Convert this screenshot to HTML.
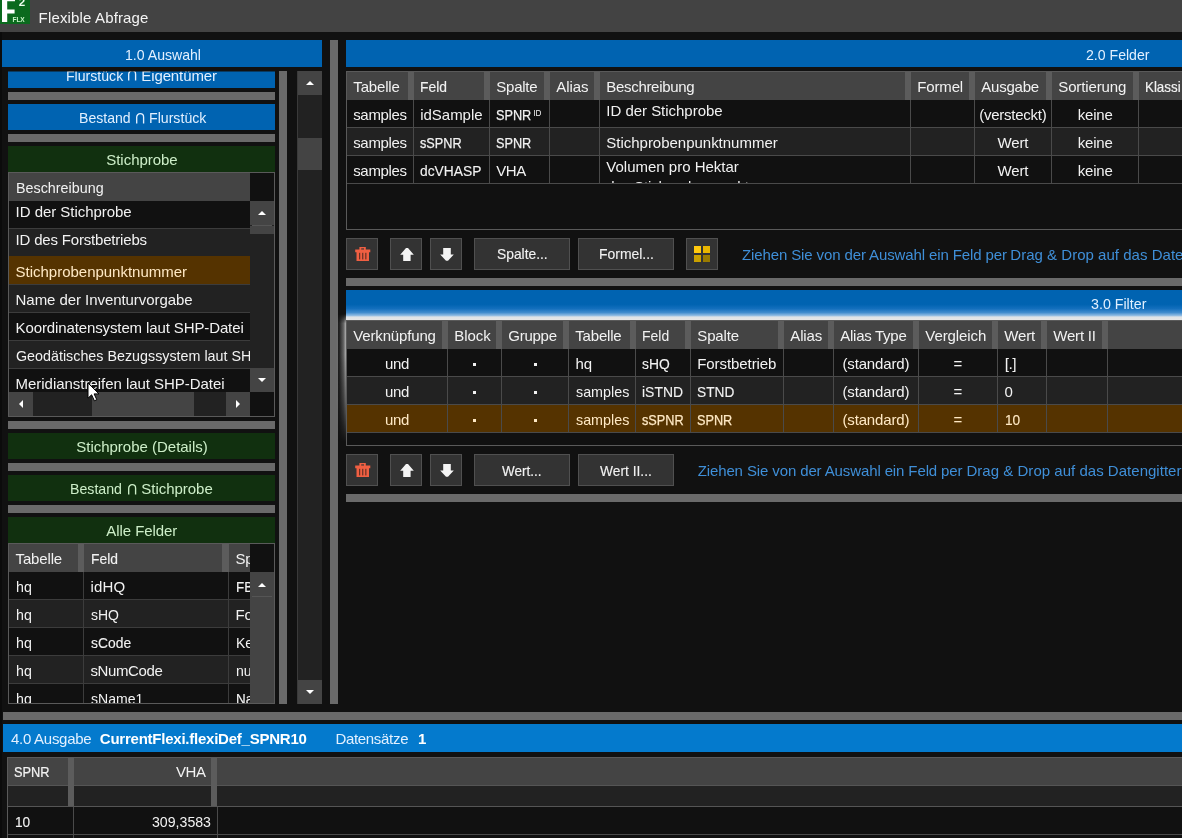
<!DOCTYPE html>
<html><head><meta charset="utf-8"><title>Flexible Abfrage</title>
<style>
html,body{margin:0;padding:0;background:#111111;}
body{width:1182px;height:838px;overflow:hidden;position:relative;font-family:"Liberation Sans", sans-serif;font-size:15px;color:#f0f0f0;}
div{position:absolute;box-sizing:border-box;}
svg{position:absolute;overflow:visible;}
</style></head><body><div id="root" style="left:0;top:0;width:1182px;height:838px;will-change:transform">
<div style="left:0px;top:0px;width:1182px;height:32px;background:#434343;"></div>
<div style="left:0px;top:0px;width:30px;height:24px;background:#0b6a1e;"></div>
<svg style="left:0;top:0" width="30" height="24"><path d="M2 -3 H15 V1.2 H7.2 V9.6 H14.6 V13.4 H7.2 V22 H2 Z" fill="#fff"/></svg>
<div style="left:18.80px;top:-7.83px;line-height:20px;height:20px;white-space:pre;color:#f0fff0;font-size:11.5px;font-weight:700;">2</div>
<div style="left:12.60px;top:9.86px;line-height:20px;height:20px;white-space:pre;color:#c8f5c8;font-size:6.6px;font-weight:700;letter-spacing:-0.156px;">FLX</div>
<div style="left:38.60px;top:7.95px;line-height:20px;height:20px;white-space:pre;color:#f4f4f4;font-size:15px;font-weight:400;letter-spacing:0.151px;">Flexible Abfrage</div>
<div style="left:0px;top:32px;width:2px;height:806px;background:#0b0b0b;"></div>
<div style="left:2px;top:40px;width:320px;height:27px;background:#0063b1;"></div>
<div style="left:125.00px;top:44.65px;line-height:20px;height:20px;white-space:pre;color:#e2f0ff;font-size:15px;font-weight:400;width:80.89px;transform:scaleX(0.9395);transform-origin:0 0;">1.0 Auswahl</div>
<div style="left:279px;top:71px;width:8px;height:633px;background:#6a6a6a;"></div>
<div style="left:330px;top:40px;width:8px;height:664px;background:#6a6a6a;"></div>
<div style="left:8px;top:71px;width:267px;height:633px;overflow:hidden;"><div style="left:-8px;top:-71px;width:1182px;height:838px">
<div style="left:8px;top:71px;width:267px;height:1px;background:rgba(17,17,17,0.5);z-index:5;"></div>
<div style="left:8px;top:62px;width:267px;height:26px;background:#0063b1;"></div>
<div style="left:66.00px;top:65.55px;line-height:20px;height:20px;white-space:pre;color:#e2f0ff;font-size:15px;font-weight:400;width:60.84px;transform:scaleX(0.9401);transform-origin:0 0;">Flurstück</div>
<svg style="left:128px;top:70.19999999999999px" width="8.3" height="10.4" viewBox="0 0 8.3 10.4"><path d="M0.7 10.4 V4.15 A3.45 3.45 0 0 1 7.6000000000000005 4.15 V10.4" fill="none" stroke="#e2f0ff" stroke-width="1.35"/></svg>
<div style="left:141.30px;top:65.55px;line-height:20px;height:20px;white-space:pre;color:#e2f0ff;font-size:15px;font-weight:400;letter-spacing:-0.112px;">Eigentümer</div>
<div style="left:8px;top:92px;width:267px;height:8px;background:#6a6a6a;"></div>
<div style="left:8px;top:104px;width:267px;height:26px;background:#0063b1;"></div>
<div style="left:78.50px;top:107.95px;line-height:20px;height:20px;white-space:pre;color:#e2f0ff;font-size:15px;font-weight:400;width:55.05px;transform:scaleX(0.9374);transform-origin:0 0;">Bestand</div>
<svg style="left:135.8px;top:112.6px" width="8.3" height="10.4" viewBox="0 0 8.3 10.4"><path d="M0.7 10.4 V4.15 A3.45 3.45 0 0 1 7.6000000000000005 4.15 V10.4" fill="none" stroke="#e2f0ff" stroke-width="1.35"/></svg>
<div style="left:149.20px;top:107.95px;line-height:20px;height:20px;white-space:pre;color:#e2f0ff;font-size:15px;font-weight:400;width:60.84px;transform:scaleX(0.9434);transform-origin:0 0;">Flurstück</div>
<div style="left:8px;top:134px;width:267px;height:8px;background:#6a6a6a;"></div>
<div style="left:8px;top:146px;width:267px;height:26px;background:#11300f;"></div>
<div style="left:106.28px;top:150.15px;line-height:20px;height:20px;white-space:pre;color:#cdeec8;font-size:15px;font-weight:400;letter-spacing:-0.032px;">Stichprobe</div>
<div style="left:8px;top:172px;width:267px;height:245px;background:#5a5a5a;"></div>
<div style="left:9px;top:173px;width:265px;height:243px;background:#222222;"></div>
<div style="left:9px;top:173px;width:241px;height:28px;background:#444444;"></div>
<div style="left:250px;top:173px;width:24px;height:28px;background:#111111;"></div>
<div style="left:15.60px;top:177.95px;line-height:20px;height:20px;white-space:pre;color:#f2f2f2;font-size:15px;font-weight:400;width:91.73px;transform:scaleX(0.9549);transform-origin:0 0;">Beschreibung</div>
<div style="left:9px;top:201px;width:241px;height:27px;background:#111111;"></div>
<div style="left:9px;top:229px;width:241px;height:27px;background:#222222;"></div>
<div style="left:9px;top:256px;width:241px;height:28px;background:#553300;"></div>
<div style="left:9px;top:285px;width:241px;height:27px;background:#222222;"></div>
<div style="left:9px;top:313px;width:241px;height:27px;background:#111111;"></div>
<div style="left:9px;top:341px;width:241px;height:27px;background:#222222;"></div>
<div style="left:9px;top:369px;width:241px;height:23px;background:#111111;"></div>
<div style="left:9px;top:228px;width:241px;height:1px;background:#3c3c3c;"></div>
<div style="left:9px;top:284px;width:241px;height:1px;background:#3c3c3c;"></div>
<div style="left:9px;top:312px;width:241px;height:1px;background:#3c3c3c;"></div>
<div style="left:9px;top:340px;width:241px;height:1px;background:#3c3c3c;"></div>
<div style="left:9px;top:368px;width:241px;height:1px;background:#3c3c3c;"></div>
<div style="left:9px;top:201px;width:241px;height:191px;overflow:hidden;"><div style="left:-9px;top:-201px;width:1182px;height:838px">
<div style="left:15.60px;top:202.15px;line-height:20px;height:20px;white-space:pre;color:#f2f2f2;font-size:15px;font-weight:400;letter-spacing:-0.043px;">ID der Stichprobe</div>
<div style="left:15.60px;top:229.75px;line-height:20px;height:20px;white-space:pre;color:#f2f2f2;font-size:15px;font-weight:400;letter-spacing:-0.188px;">ID des Forstbetriebs</div>
<div style="left:15.60px;top:261.85px;line-height:20px;height:20px;white-space:pre;color:#ffe9c4;font-size:15px;font-weight:400;letter-spacing:-0.017px;">Stichprobenpunktnummer</div>
<div style="left:15.60px;top:290.25px;line-height:20px;height:20px;white-space:pre;color:#f2f2f2;font-size:15px;font-weight:400;letter-spacing:-0.060px;">Name der Inventurvorgabe</div>
<div style="left:15.60px;top:317.85px;line-height:20px;height:20px;white-space:pre;color:#f2f2f2;font-size:15px;font-weight:400;letter-spacing:-0.118px;">Koordinatensystem laut SHP-Datei</div>
<div style="left:15.60px;top:345.75px;line-height:20px;height:20px;white-space:pre;color:#f2f2f2;font-size:15px;font-weight:400;width:296.81px;transform:scaleX(0.9535);transform-origin:0 0;">Geodätisches Bezugssystem laut SHP-Datei</div>
<div style="left:15.60px;top:373.95px;line-height:20px;height:20px;white-space:pre;color:#f2f2f2;font-size:15px;font-weight:400;letter-spacing:-0.035px;">Meridianstreifen laut SHP-Datei</div>
</div></div>
<div style="left:250px;top:201px;width:24px;height:191px;background:#222222;"></div>
<div style="left:250px;top:201px;width:24px;height:24px;background:#444444;"></div>
<div style="left:252px;top:225px;width:20px;height:1px;background:#555555;"></div>
<div style="left:250px;top:226px;width:24px;height:8px;background:#444444;"></div>
<svg style="left:258px;top:211px" width="8" height="4"><path d="M0 4 L4 0 L8 4 Z" fill="#ffffff"/></svg>
<div style="left:250px;top:368px;width:24px;height:24px;background:#444444;"></div>
<svg style="left:258px;top:378px" width="8" height="4"><path d="M0 0 L8 0 L4 4 Z" fill="#ffffff"/></svg>
<div style="left:9px;top:392px;width:241px;height:24px;background:#222222;"></div>
<div style="left:9px;top:392px;width:24px;height:24px;background:#444444;"></div>
<svg style="left:19px;top:400px" width="4" height="8"><path d="M4 0 L4 8 L0 4 Z" fill="#ffffff"/></svg>
<div style="left:92px;top:392px;width:102px;height:24px;background:#444444;"></div>
<div style="left:226px;top:392px;width:24px;height:24px;background:#444444;"></div>
<svg style="left:236px;top:400px" width="4" height="8"><path d="M0 0 L0 8 L4 4 Z" fill="#ffffff"/></svg>
<div style="left:250px;top:392px;width:24px;height:24px;background:#111111;"></div>
<div style="left:8px;top:421px;width:267px;height:8px;background:#6a6a6a;"></div>
<div style="left:8px;top:433px;width:267px;height:26px;background:#11300f;"></div>
<div style="left:76.24px;top:436.75px;line-height:20px;height:20px;white-space:pre;color:#cdeec8;font-size:15px;font-weight:400;letter-spacing:-0.011px;">Stichprobe (Details)</div>
<div style="left:8px;top:463px;width:267px;height:8px;background:#6a6a6a;"></div>
<div style="left:8px;top:475px;width:267px;height:26px;background:#11300f;"></div>
<div style="left:70.20px;top:479.05px;line-height:20px;height:20px;white-space:pre;color:#cdeec8;font-size:15px;font-weight:400;width:55.05px;transform:scaleX(0.9446);transform-origin:0 0;">Bestand</div>
<svg style="left:127.7px;top:483.70000000000005px" width="8.3" height="10.4" viewBox="0 0 8.3 10.4"><path d="M0.7 10.4 V4.15 A3.45 3.45 0 0 1 7.6000000000000005 4.15 V10.4" fill="none" stroke="#cdeec8" stroke-width="1.35"/></svg>
<div style="left:141.30px;top:479.05px;line-height:20px;height:20px;white-space:pre;color:#cdeec8;font-size:15px;font-weight:400;letter-spacing:-0.032px;">Stichprobe</div>
<div style="left:8px;top:505px;width:267px;height:8px;background:#6a6a6a;"></div>
<div style="left:8px;top:517px;width:267px;height:26px;background:#11300f;"></div>
<div style="left:106.27px;top:521.05px;line-height:20px;height:20px;white-space:pre;color:#cdeec8;font-size:15px;font-weight:400;letter-spacing:-0.064px;">Alle Felder</div>
<div style="left:8px;top:543px;width:267px;height:161px;background:#5a5a5a;"></div>
<div style="left:9px;top:544px;width:265px;height:159px;background:#111111;"></div>
<div style="left:9px;top:544px;width:241px;height:28px;background:#444444;"></div>
<div style="left:78px;top:544px;width:6px;height:28px;background:#5c5c5c;"></div>
<div style="left:222px;top:544px;width:7px;height:28px;background:#5c5c5c;"></div>
<div style="left:250px;top:544px;width:24px;height:28px;background:#111111;"></div>
<div style="left:15.60px;top:548.65px;line-height:20px;height:20px;white-space:pre;color:#f2f2f2;font-size:15px;font-weight:400;letter-spacing:-0.164px;">Tabelle</div>
<div style="left:90.50px;top:548.65px;line-height:20px;height:20px;white-space:pre;color:#f2f2f2;font-size:15px;font-weight:400;width:29.19px;transform:scaleX(0.9251);transform-origin:0 0;-webkit-text-stroke:0.12px #f2f2f2;">Feld</div>
<div style="left:229px;top:544px;width:21px;height:159px;overflow:hidden;"><div style="left:-229px;top:-544px;width:1182px;height:838px">
<div style="left:235.50px;top:548.65px;line-height:20px;height:20px;white-space:pre;color:#f2f2f2;font-size:15px;font-weight:400;letter-spacing:-0.258px;">Spalte</div>
</div></div>
<div style="left:9px;top:572px;width:241px;height:27px;background:#111111;"></div>
<div style="left:9px;top:600px;width:241px;height:27px;background:#222222;"></div>
<div style="left:9px;top:628px;width:241px;height:27px;background:#111111;"></div>
<div style="left:9px;top:656px;width:241px;height:27px;background:#222222;"></div>
<div style="left:9px;top:684px;width:241px;height:19px;background:#111111;"></div>
<div style="left:9px;top:599px;width:241px;height:1px;background:#3c3c3c;"></div>
<div style="left:9px;top:627px;width:241px;height:1px;background:#3c3c3c;"></div>
<div style="left:9px;top:655px;width:241px;height:1px;background:#3c3c3c;"></div>
<div style="left:9px;top:683px;width:241px;height:1px;background:#3c3c3c;"></div>
<div style="left:83px;top:572px;width:1px;height:131px;background:#3c3c3c;"></div>
<div style="left:228px;top:572px;width:1px;height:131px;background:#3c3c3c;"></div>
<div style="left:9px;top:572px;width:241px;height:131px;overflow:hidden;"><div style="left:-9px;top:-572px;width:1182px;height:838px">
<div style="left:15.60px;top:576.55px;line-height:20px;height:20px;white-space:pre;color:#f2f2f2;font-size:15px;font-weight:400;width:16.69px;transform:scaleX(0.9468);transform-origin:0 0;">hq</div>
<div style="left:90.50px;top:576.55px;line-height:20px;height:20px;white-space:pre;color:#f2f2f2;font-size:15px;font-weight:400;letter-spacing:0.153px;">idHQ</div>
<div style="left:235.50px;top:576.55px;line-height:20px;height:20px;white-space:pre;color:#f2f2f2;font-size:15px;font-weight:400;width:40.84px;transform:scaleX(0.8936);transform-origin:0 0;-webkit-text-stroke:0.17px #f2f2f2;">FBNR</div>
<div style="left:15.60px;top:604.95px;line-height:20px;height:20px;white-space:pre;color:#f2f2f2;font-size:15px;font-weight:400;width:16.69px;transform:scaleX(0.9468);transform-origin:0 0;">hq</div>
<div style="left:90.50px;top:604.95px;line-height:20px;height:20px;white-space:pre;color:#f2f2f2;font-size:15px;font-weight:400;width:30.00px;transform:scaleX(0.9333);transform-origin:0 0;">sHQ</div>
<div style="left:235.50px;top:604.95px;line-height:20px;height:20px;white-space:pre;color:#f2f2f2;font-size:15px;font-weight:400;letter-spacing:-0.071px;">Forstbetrieb</div>
<div style="left:15.60px;top:632.95px;line-height:20px;height:20px;white-space:pre;color:#f2f2f2;font-size:15px;font-weight:400;width:16.69px;transform:scaleX(0.9468);transform-origin:0 0;">hq</div>
<div style="left:90.50px;top:632.95px;line-height:20px;height:20px;white-space:pre;color:#f2f2f2;font-size:15px;font-weight:400;width:43.36px;transform:scaleX(0.9248);transform-origin:0 0;-webkit-text-stroke:0.12px #f2f2f2;">sCode</div>
<div style="left:235.50px;top:632.95px;line-height:20px;height:20px;white-space:pre;color:#f2f2f2;font-size:15px;font-weight:400;width:60.06px;transform:scaleX(0.9324);transform-origin:0 0;">Kennung</div>
<div style="left:15.60px;top:660.85px;line-height:20px;height:20px;white-space:pre;color:#f2f2f2;font-size:15px;font-weight:400;width:16.69px;transform:scaleX(0.9468);transform-origin:0 0;">hq</div>
<div style="left:90.50px;top:660.85px;line-height:20px;height:20px;white-space:pre;color:#f2f2f2;font-size:15px;font-weight:400;letter-spacing:-0.391px;">sNumCode</div>
<div style="left:235.50px;top:660.85px;line-height:20px;height:20px;white-space:pre;color:#f2f2f2;font-size:15px;font-weight:400;width:73.38px;transform:scaleX(0.9404);transform-origin:0 0;">num. Code</div>
<div style="left:15.60px;top:688.85px;line-height:20px;height:20px;white-space:pre;color:#f2f2f2;font-size:15px;font-weight:400;width:16.69px;transform:scaleX(0.9468);transform-origin:0 0;">hq</div>
<div style="left:90.50px;top:688.85px;line-height:20px;height:20px;white-space:pre;color:#f2f2f2;font-size:15px;font-weight:400;width:55.86px;transform:scaleX(0.9381);transform-origin:0 0;">sName1</div>
<div style="left:235.50px;top:688.85px;line-height:20px;height:20px;white-space:pre;color:#f2f2f2;font-size:15px;font-weight:400;width:52.53px;transform:scaleX(0.8947);transform-origin:0 0;-webkit-text-stroke:0.17px #f2f2f2;">Name 1</div>
</div></div>
<div style="left:250px;top:572px;width:24px;height:131px;background:#444444;"></div>
<div style="left:252px;top:596px;width:20px;height:1px;background:#555555;"></div>
<svg style="left:258px;top:583px" width="8" height="4"><path d="M0 4 L4 0 L8 4 Z" fill="#ffffff"/></svg>
<div style="left:8px;top:703px;width:267px;height:1px;background:#5a5a5a;"></div>
</div></div>
<div style="left:297px;top:71px;width:25px;height:633px;background:#222222;"></div>
<div style="left:297px;top:71px;width:25px;height:24px;background:#444444;"></div>
<svg style="left:305.8px;top:81px" width="8" height="4"><path d="M0 4 L4 0 L8 4 Z" fill="#ffffff"/></svg>
<div style="left:297px;top:138px;width:25px;height:32px;background:#444444;"></div>
<div style="left:297px;top:680px;width:25px;height:24px;background:#444444;"></div>
<svg style="left:305.8px;top:690px" width="8" height="4"><path d="M0 0 L8 0 L4 4 Z" fill="#ffffff"/></svg>
<div style="left:297px;top:71px;width:1px;height:633px;background:#3a3a3a;"></div>
<div style="left:346px;top:40px;width:836px;height:27px;background:#0063b1;"></div>
<div style="left:1086.25px;top:44.65px;line-height:20px;height:20px;white-space:pre;color:#e2f0ff;font-size:15px;font-weight:400;width:67.55px;transform:scaleX(0.9401);transform-origin:0 0;">2.0 Felder</div>
<div style="left:346px;top:71px;width:836px;height:159px;background:#5a5a5a;"></div>
<div style="left:347px;top:72px;width:835px;height:157px;background:#111111;"></div>
<div style="left:347px;top:72px;width:835px;height:28px;background:#444444;"></div>
<div style="left:408px;top:72px;width:6px;height:28px;background:#5c5c5c;"></div>
<div style="left:353.30px;top:77.35px;line-height:20px;height:20px;white-space:pre;color:#f2f2f2;font-size:15px;font-weight:400;letter-spacing:-0.164px;">Tabelle</div>
<div style="left:484px;top:72px;width:6px;height:28px;background:#5c5c5c;"></div>
<div style="left:420.30px;top:77.35px;line-height:20px;height:20px;white-space:pre;color:#f2f2f2;font-size:15px;font-weight:400;width:29.19px;transform:scaleX(0.9251);transform-origin:0 0;-webkit-text-stroke:0.12px #f2f2f2;">Feld</div>
<div style="left:544px;top:72px;width:6px;height:28px;background:#5c5c5c;"></div>
<div style="left:496.30px;top:77.35px;line-height:20px;height:20px;white-space:pre;color:#f2f2f2;font-size:15px;font-weight:400;letter-spacing:-0.258px;">Spalte</div>
<div style="left:594px;top:72px;width:6px;height:28px;background:#5c5c5c;"></div>
<div style="left:556.30px;top:77.35px;line-height:20px;height:20px;white-space:pre;color:#f2f2f2;font-size:15px;font-weight:400;letter-spacing:-0.103px;">Alias</div>
<div style="left:905px;top:72px;width:6px;height:28px;background:#5c5c5c;"></div>
<div style="left:606.30px;top:77.35px;line-height:20px;height:20px;white-space:pre;color:#f2f2f2;font-size:15px;font-weight:400;letter-spacing:-0.311px;">Beschreibung</div>
<div style="left:969px;top:72px;width:6px;height:28px;background:#5c5c5c;"></div>
<div style="left:917.30px;top:77.35px;line-height:20px;height:20px;white-space:pre;color:#f2f2f2;font-size:15px;font-weight:400;letter-spacing:-0.162px;">Formel</div>
<div style="left:1046px;top:72px;width:6px;height:28px;background:#5c5c5c;"></div>
<div style="left:981.30px;top:77.35px;line-height:20px;height:20px;white-space:pre;color:#f2f2f2;font-size:15px;font-weight:400;letter-spacing:-0.231px;">Ausgabe</div>
<div style="left:1133px;top:72px;width:6px;height:28px;background:#5c5c5c;"></div>
<div style="left:1058.30px;top:77.35px;line-height:20px;height:20px;white-space:pre;color:#f2f2f2;font-size:15px;font-weight:400;letter-spacing:-0.142px;">Sortierung</div>
<div style="left:1294px;top:72px;width:6px;height:28px;background:#5c5c5c;"></div>
<div style="left:1145.30px;top:77.35px;line-height:20px;height:20px;white-space:pre;color:#f2f2f2;font-size:15px;font-weight:400;width:40.02px;transform:scaleX(0.8897);transform-origin:0 0;-webkit-text-stroke:0.18px #f2f2f2;">Klassi</div>
<div style="left:347px;top:100px;width:835px;height:27px;background:#111111;"></div>
<div style="left:347px;top:128px;width:835px;height:27px;background:#222222;"></div>
<div style="left:347px;top:156px;width:835px;height:27px;background:#111111;"></div>
<div style="left:347px;top:127px;width:835px;height:1px;background:#4a4a4a;"></div>
<div style="left:347px;top:155px;width:835px;height:1px;background:#4a4a4a;"></div>
<div style="left:347px;top:183px;width:835px;height:1px;background:#4a4a4a;"></div>
<div style="left:413px;top:100px;width:1px;height:84px;background:#4a4a4a;"></div>
<div style="left:489px;top:100px;width:1px;height:84px;background:#4a4a4a;"></div>
<div style="left:549px;top:100px;width:1px;height:84px;background:#4a4a4a;"></div>
<div style="left:599px;top:100px;width:1px;height:84px;background:#4a4a4a;"></div>
<div style="left:910px;top:100px;width:1px;height:84px;background:#4a4a4a;"></div>
<div style="left:974px;top:100px;width:1px;height:84px;background:#4a4a4a;"></div>
<div style="left:1051px;top:100px;width:1px;height:84px;background:#4a4a4a;"></div>
<div style="left:1138px;top:100px;width:1px;height:84px;background:#4a4a4a;"></div>
<div style="left:353.20px;top:105.25px;line-height:20px;height:20px;white-space:pre;color:#f2f2f2;font-size:15px;font-weight:400;letter-spacing:-0.323px;">samples</div>
<div style="left:420.20px;top:105.25px;line-height:20px;height:20px;white-space:pre;color:#f2f2f2;font-size:15px;font-weight:400;letter-spacing:-0.018px;">idSample</div>
<div style="left:496.30px;top:105.25px;line-height:20px;height:20px;white-space:pre;color:#f2f2f2;font-size:15px;font-weight:400;width:41.69px;transform:scaleX(0.8468);transform-origin:0 0;-webkit-text-stroke:0.25px #f2f2f2;">SPNR</div>
<div style="left:979.23px;top:105.25px;line-height:20px;height:20px;white-space:pre;color:#f2f2f2;font-size:15px;font-weight:400;letter-spacing:-0.247px;">(versteckt)</div>
<div style="left:1077.79px;top:105.25px;line-height:20px;height:20px;white-space:pre;color:#f2f2f2;font-size:15px;font-weight:400;letter-spacing:-0.212px;">keine</div>
<div style="left:353.20px;top:133.15px;line-height:20px;height:20px;white-space:pre;color:#f2f2f2;font-size:15px;font-weight:400;letter-spacing:-0.323px;">samples</div>
<div style="left:420.20px;top:133.15px;line-height:20px;height:20px;white-space:pre;color:#f2f2f2;font-size:15px;font-weight:400;width:49.19px;transform:scaleX(0.8457);transform-origin:0 0;-webkit-text-stroke:0.25px #f2f2f2;">sSPNR</div>
<div style="left:496.30px;top:133.15px;line-height:20px;height:20px;white-space:pre;color:#f2f2f2;font-size:15px;font-weight:400;width:41.69px;transform:scaleX(0.8468);transform-origin:0 0;-webkit-text-stroke:0.25px #f2f2f2;">SPNR</div>
<div style="left:997.45px;top:133.15px;line-height:20px;height:20px;white-space:pre;color:#f2f2f2;font-size:15px;font-weight:400;letter-spacing:-0.102px;">Wert</div>
<div style="left:1077.79px;top:133.15px;line-height:20px;height:20px;white-space:pre;color:#f2f2f2;font-size:15px;font-weight:400;letter-spacing:-0.212px;">keine</div>
<div style="left:353.20px;top:161.15px;line-height:20px;height:20px;white-space:pre;color:#f2f2f2;font-size:15px;font-weight:400;letter-spacing:-0.323px;">samples</div>
<div style="left:420.20px;top:161.15px;line-height:20px;height:20px;white-space:pre;color:#f2f2f2;font-size:15px;font-weight:400;width:66.70px;transform:scaleX(0.9205);transform-origin:0 0;-webkit-text-stroke:0.13px #f2f2f2;">dcVHASP</div>
<div style="left:496.30px;top:161.15px;line-height:20px;height:20px;white-space:pre;color:#f2f2f2;font-size:15px;font-weight:400;letter-spacing:-0.448px;">VHA</div>
<div style="left:997.45px;top:161.15px;line-height:20px;height:20px;white-space:pre;color:#f2f2f2;font-size:15px;font-weight:400;letter-spacing:-0.102px;">Wert</div>
<div style="left:1077.79px;top:161.15px;line-height:20px;height:20px;white-space:pre;color:#f2f2f2;font-size:15px;font-weight:400;letter-spacing:-0.212px;">keine</div>
<div style="left:533.20px;top:103.71px;line-height:20px;height:20px;white-space:pre;color:#f2f2f2;font-size:8.2px;font-weight:400;">ID</div>
<div style="left:600px;top:100px;width:310px;height:83px;overflow:hidden;"><div style="left:-600px;top:-100px;width:1182px;height:838px">
<div style="left:606.30px;top:101.45px;line-height:20px;height:20px;white-space:pre;color:#f2f2f2;font-size:15px;font-weight:400;letter-spacing:-0.026px;">ID der Stichprobe</div>
<div style="left:606.30px;top:133.15px;line-height:20px;height:20px;white-space:pre;color:#f2f2f2;font-size:15px;font-weight:400;letter-spacing:-0.017px;">Stichprobenpunktnummer</div>
<div style="left:606.30px;top:157.25px;line-height:20px;height:20px;white-space:pre;color:#f2f2f2;font-size:15px;font-weight:400;letter-spacing:-0.004px;">Volumen pro Hektar</div>
<div style="left:606.30px;top:177.25px;line-height:20px;height:20px;white-space:pre;color:#f2f2f2;font-size:15px;font-weight:400;letter-spacing:-0.134px;">des Stichprobenpunktes</div>
</div></div>
<div style="left:346px;top:238px;width:32px;height:32px;background:#505050;"></div>
<div style="left:347px;top:239px;width:30px;height:30px;background:#333333;"></div>
<svg style="left:355px;top:247px" width="16" height="15" viewBox="0 0 16 15"><path d="M4.4 0 H10.8 V2.5 H15.3 V5.2 H14 V14 H1.5 V5.2 H0.2 V2.5 H4.4 Z" fill="#f05f42"/><rect x="6.2" y="1.4" width="2.8" height="1.1" fill="#333333"/><rect x="4.1" y="5.8" width="1.1" height="6.6" fill="#5a2d22"/><rect x="7.2" y="5.8" width="1.1" height="6.6" fill="#5a2d22"/><rect x="10.3" y="5.8" width="1.1" height="6.6" fill="#5a2d22"/></svg>
<div style="left:390px;top:238px;width:32px;height:32px;background:#505050;"></div>
<div style="left:391px;top:239px;width:30px;height:30px;background:#333333;"></div>
<svg style="left:399.6px;top:247.6px" width="14" height="14" viewBox="0 0 14 14"><path d="M6 0 H8 L13.8 6.8 H10.6 V13 H3.2 V6.8 H0.2 Z" fill="#f4f4f4"/></svg>
<div style="left:430px;top:238px;width:32px;height:32px;background:#505050;"></div>
<div style="left:431px;top:239px;width:30px;height:30px;background:#333333;"></div>
<svg style="left:439.5px;top:247.7px" width="14" height="14" viewBox="0 0 14 14"><path d="M6 12.8 H8 L13.8 6.6 H10.8 V0 H3.2 V6.6 H0.2 Z" fill="#f4f4f4"/></svg>
<div style="left:474px;top:238px;width:96px;height:32px;background:#505050;"></div>
<div style="left:475px;top:239px;width:94px;height:30px;background:#333333;"></div>
<div style="left:578px;top:238px;width:96px;height:32px;background:#505050;"></div>
<div style="left:579px;top:239px;width:94px;height:30px;background:#333333;"></div>
<div style="left:346px;top:454px;width:32px;height:32px;background:#505050;"></div>
<div style="left:347px;top:455px;width:30px;height:30px;background:#333333;"></div>
<svg style="left:355px;top:463px" width="16" height="15" viewBox="0 0 16 15"><path d="M4.4 0 H10.8 V2.5 H15.3 V5.2 H14 V14 H1.5 V5.2 H0.2 V2.5 H4.4 Z" fill="#f05f42"/><rect x="6.2" y="1.4" width="2.8" height="1.1" fill="#333333"/><rect x="4.1" y="5.8" width="1.1" height="6.6" fill="#5a2d22"/><rect x="7.2" y="5.8" width="1.1" height="6.6" fill="#5a2d22"/><rect x="10.3" y="5.8" width="1.1" height="6.6" fill="#5a2d22"/></svg>
<div style="left:390px;top:454px;width:32px;height:32px;background:#505050;"></div>
<div style="left:391px;top:455px;width:30px;height:30px;background:#333333;"></div>
<svg style="left:399.6px;top:463.6px" width="14" height="14" viewBox="0 0 14 14"><path d="M6 0 H8 L13.8 6.8 H10.6 V13 H3.2 V6.8 H0.2 Z" fill="#f4f4f4"/></svg>
<div style="left:430px;top:454px;width:32px;height:32px;background:#505050;"></div>
<div style="left:431px;top:455px;width:30px;height:30px;background:#333333;"></div>
<svg style="left:439.5px;top:463.7px" width="14" height="14" viewBox="0 0 14 14"><path d="M6 12.8 H8 L13.8 6.6 H10.8 V0 H3.2 V6.6 H0.2 Z" fill="#f4f4f4"/></svg>
<div style="left:474px;top:454px;width:96px;height:32px;background:#505050;"></div>
<div style="left:475px;top:455px;width:94px;height:30px;background:#333333;"></div>
<div style="left:578px;top:454px;width:96px;height:32px;background:#505050;"></div>
<div style="left:579px;top:455px;width:94px;height:30px;background:#333333;"></div>
<div style="left:497.15px;top:244.45px;line-height:20px;height:20px;white-space:pre;color:#f2f2f2;font-size:15px;font-weight:400;width:55.05px;transform:scaleX(0.9210);transform-origin:0 0;-webkit-text-stroke:0.13px #f2f2f2;">Spalte...</div>
<div style="left:598.80px;top:244.45px;line-height:20px;height:20px;white-space:pre;color:#f2f2f2;font-size:15px;font-weight:400;width:59.19px;transform:scaleX(0.9293);transform-origin:0 0;-webkit-text-stroke:0.11px #f2f2f2;">Formel...</div>
<div style="left:686px;top:238px;width:32px;height:32px;background:#505050;"></div>
<div style="left:687px;top:239px;width:30px;height:30px;background:#333333;"></div>
<div style="left:694px;top:246px;width:7px;height:7px;background:#ffc90e;"></div>
<div style="left:703px;top:246px;width:7px;height:7px;background:#e8b500;"></div>
<div style="left:694px;top:255px;width:7px;height:7px;background:#c9a000;"></div>
<div style="left:703px;top:255px;width:7px;height:7px;background:#9a7b00;"></div>
<div style="left:742.00px;top:245.05px;line-height:20px;height:20px;white-space:pre;color:#3f8fd8;font-size:15px;font-weight:400;letter-spacing:-0.117px;">Ziehen Sie von der Auswahl ein Feld per </div>
<div style="left:1010.30px;top:245.05px;line-height:20px;height:20px;white-space:pre;color:#3f8fd8;font-size:15px;font-weight:400;letter-spacing:0.023px;">Drag &amp; Drop auf das Datengitter</div>
<div style="left:346px;top:278px;width:836px;height:8px;background:#6a6a6a;"></div>
<div style="left:336px;top:314px;width:10px;height:134px;background:linear-gradient(to right,rgba(190,190,190,0) 0%,rgba(190,190,190,0.12) 35%,rgba(200,200,200,0.45) 75%,rgba(215,215,215,0.8) 100%);-webkit-mask-image:linear-gradient(to bottom,transparent 0%,#000 7%,#000 30%,rgba(0,0,0,0.55) 65%,transparent 96%);mask-image:linear-gradient(to bottom,transparent 0%,#000 7%,#000 30%,rgba(0,0,0,0.55) 65%,transparent 96%);"></div>
<div style="left:346px;top:290px;width:836px;height:30px;background:#0063b1;background:linear-gradient(#0063b1 0%,#0063b1 48%,#136fbd 62%,#3f8bcd 75%,#8fbbe2 85%,#dfe3e6 90%,#e6e6e6 100%);"></div>
<div style="left:1090.60px;top:293.95px;line-height:20px;height:20px;white-space:pre;color:#e2f0ff;font-size:15px;font-weight:400;width:58.36px;transform:scaleX(0.9493);transform-origin:0 0;">3.0 Filter</div>
<div style="left:346px;top:320px;width:836px;height:126px;background:#5a5a5a;"></div>
<div style="left:347px;top:321px;width:835px;height:124px;background:#111111;"></div>
<div style="left:347px;top:321px;width:835px;height:28px;background:#444444;"></div>
<div style="left:442px;top:321px;width:6px;height:28px;background:#5c5c5c;"></div>
<div style="left:353.30px;top:325.65px;line-height:20px;height:20px;white-space:pre;color:#f2f2f2;font-size:15px;font-weight:400;letter-spacing:-0.159px;">Verknüpfung</div>
<div style="left:496px;top:321px;width:6px;height:28px;background:#5c5c5c;"></div>
<div style="left:454.30px;top:325.65px;line-height:20px;height:20px;white-space:pre;color:#f2f2f2;font-size:15px;font-weight:400;letter-spacing:-0.078px;">Block</div>
<div style="left:563px;top:321px;width:6px;height:28px;background:#5c5c5c;"></div>
<div style="left:508.30px;top:325.65px;line-height:20px;height:20px;white-space:pre;color:#f2f2f2;font-size:15px;font-weight:400;letter-spacing:-0.258px;">Gruppe</div>
<div style="left:630px;top:321px;width:6px;height:28px;background:#5c5c5c;"></div>
<div style="left:575.30px;top:325.65px;line-height:20px;height:20px;white-space:pre;color:#f2f2f2;font-size:15px;font-weight:400;letter-spacing:-0.192px;">Tabelle</div>
<div style="left:685px;top:321px;width:6px;height:28px;background:#5c5c5c;"></div>
<div style="left:642.30px;top:325.65px;line-height:20px;height:20px;white-space:pre;color:#f2f2f2;font-size:15px;font-weight:400;width:29.19px;transform:scaleX(0.9319);transform-origin:0 0;">Feld</div>
<div style="left:778px;top:321px;width:6px;height:28px;background:#5c5c5c;"></div>
<div style="left:697.30px;top:325.65px;line-height:20px;height:20px;white-space:pre;color:#f2f2f2;font-size:15px;font-weight:400;letter-spacing:-0.158px;">Spalte</div>
<div style="left:828px;top:321px;width:6px;height:28px;background:#5c5c5c;"></div>
<div style="left:790.30px;top:325.65px;line-height:20px;height:20px;white-space:pre;color:#f2f2f2;font-size:15px;font-weight:400;letter-spacing:-0.163px;">Alias</div>
<div style="left:913px;top:321px;width:6px;height:28px;background:#5c5c5c;"></div>
<div style="left:840.30px;top:325.65px;line-height:20px;height:20px;white-space:pre;color:#f2f2f2;font-size:15px;font-weight:400;letter-spacing:-0.274px;">Alias Type</div>
<div style="left:992px;top:321px;width:6px;height:28px;background:#5c5c5c;"></div>
<div style="left:925.30px;top:325.65px;line-height:20px;height:20px;white-space:pre;color:#f2f2f2;font-size:15px;font-weight:400;letter-spacing:-0.080px;">Vergleich</div>
<div style="left:1041px;top:321px;width:6px;height:28px;background:#5c5c5c;"></div>
<div style="left:1004.30px;top:325.65px;line-height:20px;height:20px;white-space:pre;color:#f2f2f2;font-size:15px;font-weight:400;letter-spacing:-0.177px;">Wert</div>
<div style="left:1102px;top:321px;width:6px;height:28px;background:#5c5c5c;"></div>
<div style="left:1053.30px;top:325.65px;line-height:20px;height:20px;white-space:pre;color:#f2f2f2;font-size:15px;font-weight:400;letter-spacing:-0.215px;">Wert II</div>
<div style="left:347px;top:349px;width:835px;height:27px;background:#111111;"></div>
<div style="left:385.03px;top:353.95px;line-height:20px;height:20px;white-space:pre;color:#f2f2f2;font-size:15px;font-weight:400;letter-spacing:-0.344px;">und</div>
<div style="left:473px;top:362.8px;width:3.3999999999999773px;height:3.3999999999999773px;background:#f2f2f2;"></div>
<div style="left:533.6px;top:362.8px;width:3.3999999999999773px;height:3.3999999999999773px;background:#f2f2f2;"></div>
<div style="left:575.50px;top:353.95px;line-height:20px;height:20px;white-space:pre;color:#f2f2f2;font-size:15px;font-weight:400;">hq</div>
<div style="left:642.10px;top:353.95px;line-height:20px;height:20px;white-space:pre;color:#f2f2f2;font-size:15px;font-weight:400;width:30.00px;transform:scaleX(0.9233);transform-origin:0 0;-webkit-text-stroke:0.12px #f2f2f2;">sHQ</div>
<div style="left:697.20px;top:353.95px;line-height:20px;height:20px;white-space:pre;color:#f2f2f2;font-size:15px;font-weight:400;letter-spacing:-0.071px;">Forstbetrieb</div>
<div style="left:842.43px;top:353.95px;line-height:20px;height:20px;white-space:pre;color:#f2f2f2;font-size:15px;font-weight:400;letter-spacing:-0.138px;">(standard)</div>
<div style="left:953.62px;top:353.95px;line-height:20px;height:20px;white-space:pre;color:#f2f2f2;font-size:15px;font-weight:400;">=</div>
<div style="left:1004.60px;top:353.95px;line-height:20px;height:20px;white-space:pre;color:#f2f2f2;font-size:15px;font-weight:400;width:12.52px;transform:scaleX(0.9109);transform-origin:0 0;-webkit-text-stroke:0.14px #f2f2f2;">[.]</div>
<div style="left:347px;top:377px;width:835px;height:27px;background:#222222;"></div>
<div style="left:385.03px;top:381.85px;line-height:20px;height:20px;white-space:pre;color:#f2f2f2;font-size:15px;font-weight:400;letter-spacing:-0.344px;">und</div>
<div style="left:473px;top:390.7px;width:3.3999999999999773px;height:3.3999999999999773px;background:#f2f2f2;"></div>
<div style="left:533.6px;top:390.7px;width:3.3999999999999773px;height:3.3999999999999773px;background:#f2f2f2;"></div>
<div style="left:575.50px;top:381.85px;line-height:20px;height:20px;white-space:pre;color:#f2f2f2;font-size:15px;font-weight:400;width:55.86px;transform:scaleX(0.9542);transform-origin:0 0;">samples</div>
<div style="left:642.10px;top:381.85px;line-height:20px;height:20px;white-space:pre;color:#f2f2f2;font-size:15px;font-weight:400;width:44.17px;transform:scaleX(0.9282);transform-origin:0 0;-webkit-text-stroke:0.11px #f2f2f2;">iSTND</div>
<div style="left:697.20px;top:381.85px;line-height:20px;height:20px;white-space:pre;color:#f2f2f2;font-size:15px;font-weight:400;width:40.84px;transform:scaleX(0.9132);transform-origin:0 0;-webkit-text-stroke:0.14px #f2f2f2;">STND</div>
<div style="left:842.43px;top:381.85px;line-height:20px;height:20px;white-space:pre;color:#f2f2f2;font-size:15px;font-weight:400;letter-spacing:-0.138px;">(standard)</div>
<div style="left:953.62px;top:381.85px;line-height:20px;height:20px;white-space:pre;color:#f2f2f2;font-size:15px;font-weight:400;">=</div>
<div style="left:1004.60px;top:381.85px;line-height:20px;height:20px;white-space:pre;color:#f2f2f2;font-size:15px;font-weight:400;">0</div>
<div style="left:347px;top:405px;width:835px;height:27px;background:#553300;"></div>
<div style="left:385.03px;top:409.85px;line-height:20px;height:20px;white-space:pre;color:#ffe9c4;font-size:15px;font-weight:400;letter-spacing:-0.344px;">und</div>
<div style="left:473px;top:418.7px;width:3.3999999999999773px;height:3.3999999999999773px;background:#ffe9c4;"></div>
<div style="left:533.6px;top:418.7px;width:3.3999999999999773px;height:3.3999999999999773px;background:#ffe9c4;"></div>
<div style="left:575.50px;top:409.85px;line-height:20px;height:20px;white-space:pre;color:#ffe9c4;font-size:15px;font-weight:400;width:55.86px;transform:scaleX(0.9542);transform-origin:0 0;">samples</div>
<div style="left:642.10px;top:409.85px;line-height:20px;height:20px;white-space:pre;color:#ffe9c4;font-size:15px;font-weight:400;width:49.19px;transform:scaleX(0.8457);transform-origin:0 0;-webkit-text-stroke:0.25px #ffe9c4;">sSPNR</div>
<div style="left:697.20px;top:409.85px;line-height:20px;height:20px;white-space:pre;color:#ffe9c4;font-size:15px;font-weight:400;width:41.69px;transform:scaleX(0.8468);transform-origin:0 0;-webkit-text-stroke:0.25px #ffe9c4;">SPNR</div>
<div style="left:842.43px;top:409.85px;line-height:20px;height:20px;white-space:pre;color:#ffe9c4;font-size:15px;font-weight:400;letter-spacing:-0.138px;">(standard)</div>
<div style="left:953.62px;top:409.85px;line-height:20px;height:20px;white-space:pre;color:#ffe9c4;font-size:15px;font-weight:400;">=</div>
<div style="left:1004.60px;top:409.85px;line-height:20px;height:20px;white-space:pre;color:#ffe9c4;font-size:15px;font-weight:400;width:16.69px;transform:scaleX(0.9109);transform-origin:0 0;-webkit-text-stroke:0.14px #ffe9c4;">10</div>
<div style="left:347px;top:376px;width:835px;height:1px;background:#4a4a4a;"></div>
<div style="left:347px;top:404px;width:835px;height:1px;background:#4a4a4a;"></div>
<div style="left:347px;top:432px;width:835px;height:1px;background:#4a4a4a;"></div>
<div style="left:447px;top:349px;width:1px;height:84px;background:#4a4a4a;"></div>
<div style="left:501px;top:349px;width:1px;height:84px;background:#4a4a4a;"></div>
<div style="left:568px;top:349px;width:1px;height:84px;background:#4a4a4a;"></div>
<div style="left:635px;top:349px;width:1px;height:84px;background:#4a4a4a;"></div>
<div style="left:690px;top:349px;width:1px;height:84px;background:#4a4a4a;"></div>
<div style="left:783px;top:349px;width:1px;height:84px;background:#4a4a4a;"></div>
<div style="left:833px;top:349px;width:1px;height:84px;background:#4a4a4a;"></div>
<div style="left:918px;top:349px;width:1px;height:84px;background:#4a4a4a;"></div>
<div style="left:997px;top:349px;width:1px;height:84px;background:#4a4a4a;"></div>
<div style="left:1046px;top:349px;width:1px;height:84px;background:#4a4a4a;"></div>
<div style="left:1107px;top:349px;width:1px;height:84px;background:#4a4a4a;"></div>
<div style="left:502.30px;top:460.95px;line-height:20px;height:20px;white-space:pre;color:#f2f2f2;font-size:15px;font-weight:400;width:43.91px;transform:scaleX(0.8974);transform-origin:0 0;-webkit-text-stroke:0.16px #f2f2f2;">Wert...</div>
<div style="left:600.10px;top:460.95px;line-height:20px;height:20px;white-space:pre;color:#f2f2f2;font-size:15px;font-weight:400;width:56.41px;transform:scaleX(0.9183);transform-origin:0 0;-webkit-text-stroke:0.13px #f2f2f2;">Wert II...</div>
<div style="left:697.70px;top:460.95px;line-height:20px;height:20px;white-space:pre;color:#3f8fd8;font-size:15px;font-weight:400;letter-spacing:-0.117px;">Ziehen Sie von der Auswahl ein Feld per </div>
<div style="left:966.50px;top:460.95px;line-height:20px;height:20px;white-space:pre;color:#3f8fd8;font-size:15px;font-weight:400;letter-spacing:0.023px;">Drag &amp; Drop auf das Datengitter</div>
<div style="left:346px;top:494px;width:836px;height:8px;background:#6a6a6a;"></div>
<div style="left:3px;top:712px;width:1179px;height:8px;background:#6a6a6a;"></div>
<div style="left:3px;top:724px;width:1179px;height:28px;background:#047acd;"></div>
<div style="left:11.00px;top:728.75px;line-height:20px;height:20px;white-space:pre;color:#e2f0ff;font-size:15px;font-weight:400;letter-spacing:-0.275px;">4.0 Ausgabe</div>
<div style="left:99.80px;top:728.75px;line-height:20px;height:20px;white-space:pre;color:#ffffff;font-size:15px;font-weight:700;letter-spacing:-0.236px;">CurrentFlexi.flexiDef_SPNR10</div>
<div style="left:335.40px;top:728.75px;line-height:20px;height:20px;white-space:pre;color:#e2f0ff;font-size:15px;font-weight:400;letter-spacing:-0.309px;">Datensätze</div>
<div style="left:418.00px;top:728.75px;line-height:20px;height:20px;white-space:pre;color:#ffffff;font-size:15px;font-weight:700;">1</div>
<div style="left:7px;top:757px;width:1175px;height:81px;background:#5a5a5a;"></div>
<div style="left:8px;top:758px;width:1174px;height:80px;background:#111111;"></div>
<div style="left:8px;top:758px;width:1174px;height:27px;background:#444444;"></div>
<div style="left:8px;top:785px;width:1174px;height:1px;background:#555555;"></div>
<div style="left:8px;top:786px;width:1174px;height:20px;background:#222222;"></div>
<div style="left:8px;top:806px;width:1174px;height:1px;background:#555555;"></div>
<div style="left:8px;top:834px;width:1174px;height:1px;background:#4a4a4a;"></div>
<div style="left:68px;top:758px;width:6px;height:48px;background:#5c5c5c;"></div>
<div style="left:211px;top:758px;width:6px;height:48px;background:#5c5c5c;"></div>
<div style="left:73px;top:807px;width:1px;height:31px;background:#4a4a4a;"></div>
<div style="left:217px;top:807px;width:1px;height:31px;background:#4a4a4a;"></div>
<div style="left:14.40px;top:762.15px;line-height:20px;height:20px;white-space:pre;color:#f2f2f2;font-size:15px;font-weight:400;width:41.69px;transform:scaleX(0.8516);transform-origin:0 0;-webkit-text-stroke:0.24px #f2f2f2;">SPNR</div>
<div style="left:175.95px;top:762.15px;line-height:20px;height:20px;white-space:pre;color:#f2f2f2;font-size:15px;font-weight:400;letter-spacing:-0.448px;">VHA</div>
<div style="left:14.90px;top:812.05px;line-height:20px;height:20px;white-space:pre;color:#f2f2f2;font-size:15px;font-weight:400;width:16.69px;transform:scaleX(0.9109);transform-origin:0 0;-webkit-text-stroke:0.14px #f2f2f2;">10</div>
<div style="left:151.50px;top:812.05px;line-height:20px;height:20px;white-space:pre;color:#f2f2f2;font-size:15px;font-weight:400;width:62.58px;transform:scaleX(0.9428);transform-origin:0 0;">309,3583</div>
<svg style="left:87px;top:381.6px" width="13" height="20" viewBox="0 0 13 20"><path d="M1 1 L1 16.2 L4.6 12.8 L7.4 18.8 L9.8 17.7 L7.1 11.9 L12 11.9 Z" fill="#fff" stroke="#000" stroke-width="1"/></svg>
</div></body></html>
